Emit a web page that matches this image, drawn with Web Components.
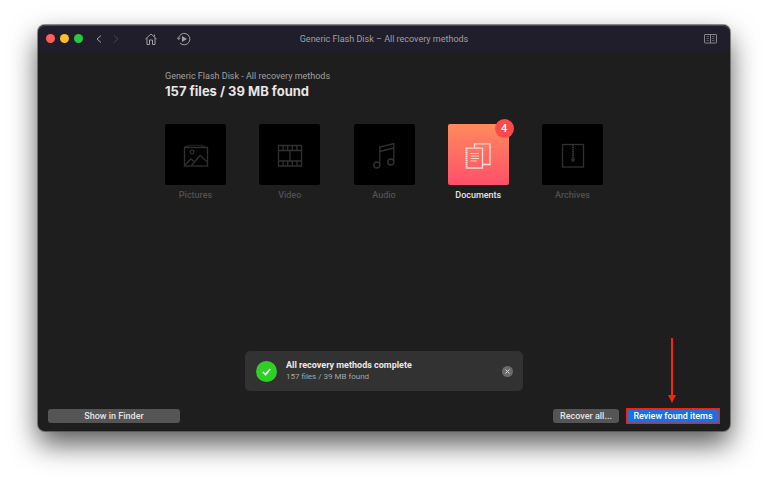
<!DOCTYPE html>
<html lang="en">
<head>
<meta charset="utf-8">
<title>Generic Flash Disk – All recovery methods</title>
<style>
body{margin:0;background:#fff;font-family:Roboto,"Liberation Sans",sans-serif;font-size:9px;line-height:12px}
</style>
</head>
<body>
<app-window>
  <title-bar slot="bar">Generic Flash Disk – All recovery methods</title-bar>
  <scan-summary>
    <span slot="source">Generic Flash Disk - All recovery methods</span>
    <span slot="total">157 files / 39 MB found</span>
  </scan-summary>
  <category-grid>
    <file-category label="Pictures">
      <svg viewBox="0 0 26 26"><path d="M2 5V4.500h3V3.500h14v1h3V5" opacity=".6"/><rect x="1.500" y="5.500" width="23" height="18.500"/><circle cx="9" cy="10" r="1.800"/><path d="M2 23l6-6 3.500 3M8.500 23.500l8.500-10 7.500 6.500"/></svg>
    </file-category>
    <file-category label="Video">
      <svg viewBox="0 0 26 26"><path d="M1.500 3.500h23v20.500h-23zM1.500 8.500h23M1.500 19h23M13 8.500V19M6.100 3.500v5M10.700 3.500v5M15.300 3.500v5M19.900 3.500v5M6.100 19v5M10.700 19v5M15.300 19v5M19.900 19v5"/></svg>
    </file-category>
    <file-category label="Audio">
      <svg viewBox="0 0 26 26"><circle cx="5.800" cy="23" r="3"/><circle cx="19.800" cy="20" r="3"/><path d="M8.800 23V5l14-3.500V20M8.800 9.500l14-3.500"/></svg>
    </file-category>
    <file-category label="Documents" count="4" active>
      <svg viewBox="0 0 26 26"><path d="M9.500 6V1.800h15.500V22.500H18"/><path d="M2 6.200H17.500V26H2"/><path d="M1.500 5.600V26.600" stroke-width="2" stroke-dasharray="1.400 .6"/><path stroke-width=".9" d="M5.500 11.500h8.500M5.500 14h8.500M5.500 16.500h8.500M5.500 19h6"/></svg>
    </file-category>
    <file-category label="Archives">
      <svg viewBox="0 0 26 26"><rect x="2.500" y="2.500" width="21" height="22.500"/><path d="M13 2.500V17" stroke-width="2" stroke-dasharray="1.500 .5"/><rect x="12" y="17" width="2" height="2"/></svg>
    </file-category>
  </category-grid>
  <status-toast slot="toast">
    <span slot="title">All recovery methods complete</span>
    <span slot="detail">157 files / 39 MB found</span>
  </status-toast>
  <action-bar slot="actions">
    <push-button slot="start" wide>Show in Finder</push-button>
    <push-button>Recover all...</push-button>
    <push-button primary>Review found items</push-button>
  </action-bar>
</app-window>

<script>
const define = (name, html, setup) => customElements.define(name, class extends HTMLElement {
  constructor() {
    super();
    const t = document.createElement('template');
    t.innerHTML = `<style>*{box-sizing:border-box}button{font:inherit;color:inherit;border:0;padding:0;margin:0;background:none}svg{display:block;fill:none;stroke:currentColor}</style>` + html;
    this.attachShadow({mode: 'open'}).append(t.content.cloneNode(true));
    if (setup) setup(this, this.shadowRoot);
  }
});

define('app-window', `
<style>
:host{display:flex;box-sizing:border-box;min-height:100vh;padding:25px 38px 50px}
.win{flex:1;display:flex;flex-direction:column;min-width:0;background:#1e1e1e;border-radius:7px;box-shadow:0 0 0 1px rgba(70,70,72,.6),0 13px 28px rgba(0,0,0,.66)}
main{flex:1;width:100%;max-width:438px;margin:0 auto;padding-top:19px}
.toast{display:flex;justify-content:center;padding-bottom:17px}
</style>
<div class="win">
  <slot name="bar"></slot>
  <main><slot></slot></main>
  <div class="toast"><slot name="toast"></slot></div>
  <slot name="actions"></slot>
</div>`);

define('title-bar', `
<style>
:host{display:block;color:#a09ea6}
header{display:grid;grid-template-columns:1fr auto 1fr;align-items:center;height:26px;padding:1px 13px 0 8px;background:#201e2a;border-radius:7px 7px 0 0;box-shadow:inset 0 1px 0 #4b4a50}
nav,.lights{display:flex;align-items:center}
.lights{gap:5px;margin-right:12px}
.lights button{width:9px;height:9px;border-radius:50%}
.r{background:#ff5f57}.y{background:#febc2e}.g{background:#28c840}
.back,.next{width:8px;margin-right:9px}
.next{color:#47454f;margin-right:25px}
.home{margin-right:20px}
.end{justify-self:end;color:#85838c}
h1{font-size:9px;font-weight:400;margin:0;padding-left:5px;white-space:nowrap}
</style>
<header>
  <nav>
    <div class="lights"><button class="r" aria-label="Close"></button><button class="y" aria-label="Minimize"></button><button class="g" aria-label="Zoom"></button></div>
    <button class="back" aria-label="Back"><svg width="8" height="10" viewBox="0 0 8 10"><path d="M6 1.500L2 5l4 3.500"/></svg></button>
    <button class="next" aria-label="Forward"><svg width="8" height="10" viewBox="0 0 8 10"><path d="M2 1.500L6 5 2 8.500"/></svg></button>
    <button class="home" aria-label="Home"><svg width="12" height="12" viewBox="0 0 12 12"><path d="M.5 6L6 1l5.500 5M2 5v6.500h2.500V7h3v4.500H10V5M9.500 3.500V1.500"/></svg></button>
    <button aria-label="Sessions"><svg width="14" height="14" viewBox="0 0 14 14"><path d="M1.500 6.500A5.700 5.700 0 1 1 3 11M0 5.500l1.500 2L3.500 6"/><path fill="currentColor" stroke="none" d="M5 4v6l5-3z"/></svg></button>
  </nav>
  <h1><slot></slot></h1>
  <button class="end" aria-label="Guide"><svg width="13" height="10" viewBox="0 0 13 10"><rect x=".5" y=".5" width="12" height="8.500" rx=".5"/><path d="M6.500 .5V9"/><path stroke-width=".6" d="M2.500 2.500h2.500M2.500 4.500h2.500M2.500 6.500h2.500M8 2.500h2.500M8 4.500h2.500M8 6.500h2.500"/></svg></button>
</header>`);

define('scan-summary', `
<style>
:host{display:block}
p{margin:0;color:#a0a0a0}
h2{margin:0;font-family:Inter,"Liberation Sans",sans-serif;font-size:13px;line-height:18px;font-weight:700;color:#e6e6e6}
</style>
<p><slot name="source"></slot></p><h2><slot name="total"></slot></h2>`);

define('category-grid', `
<style>:host{display:flex;justify-content:space-between;gap:8px;margin-top:24px}</style><slot></slot>`);

define('file-category', `
<style>
:host{display:block;font-weight:500}
button{display:flex;flex-direction:column;align-items:center;gap:4px;width:61px}
.tile{position:relative;display:grid;place-items:center;width:61px;height:61px;border-radius:2px;background:#000;color:#303030}
.label{color:#505050}
:host([active]) .tile{background:linear-gradient(#ff8a5c,#ff4f69);color:#ffdcd8}
:host([active]) .label{color:#e4e4e4}
.badge{position:absolute;top:-5px;right:-5px;width:19px;height:19px;border-radius:50%;background:#fc4a4a;color:#fff;font-size:11px;line-height:19px;text-align:center}
.badge:empty{display:none}
::slotted(svg){display:block;width:26px;height:26px;fill:none;stroke:currentColor;stroke-width:1.3;overflow:visible}
</style>
<button><span class="tile"><slot></slot><span class="badge"></span></span><span class="label"></span></button>`,
(el, root) => {
  root.querySelector('.label').textContent = el.getAttribute('label');
  root.querySelector('.badge').textContent = el.getAttribute('count') || '';
});

define('status-toast', `
<style>
:host{display:flex;align-items:center;box-sizing:border-box;width:278px;height:40px;padding:0 10px 0 11px;gap:9px;border-radius:5px;background:#323232}
.ok{width:21px;height:21px;flex:none;stroke:none}
.text{flex:1}
.text div:first-child{font-weight:700;color:#e8e8e8}
.text div:last-child{font-size:8px;color:#a5a5a5}
</style>
<svg class="ok" viewBox="0 0 21 21"><circle cx="10.500" cy="10.500" r="10.500" fill="#2fd025"/><path d="M6.800 10.800l2.700 2.700 4.800-5.500" stroke="#fff" stroke-width="1.600"/></svg>
<div class="text"><div><slot name="title"></slot></div><div><slot name="detail"></slot></div></div>
<button aria-label="Dismiss"><svg width="11" height="11" viewBox="0 0 11 11"><circle cx="5.500" cy="5.500" r="5.500" fill="#6b6b6b" stroke="none"/><path d="M3.500 3.500l4 4M7.500 3.500l-4 4" stroke="#d8d8d8"/></svg></button>`);

define('action-bar', `
<style>
:host{display:flex;justify-content:space-between;align-items:center;padding:0 10px 7px}
.end{display:flex;align-items:center;gap:7px}
</style>
<slot name="start"></slot><div class="end"><slot></slot></div>`);

define('push-button', `
<style>
:host{display:block;position:relative}
button{display:block;height:14px;min-width:66px;padding:0 4px;border-radius:3px;background:#555;color:#e4e4e4;line-height:14px;font-weight:500;white-space:nowrap}
:host([wide]) button{min-width:132px}
:host([primary]) button{height:16px;min-width:94px;line-height:14px;padding:0 4px;border:1px solid #f3200c;outline:1px solid rgba(243,32,12,.5);outline-offset:-2px;border-radius:0;background:#1672e6;color:#fff}
.arrow{display:none;position:absolute;left:50%;bottom:100%;margin:0 0 5px -5px}
:host([primary]) .arrow{display:block}
</style>
<button><slot></slot></button>
<svg class="arrow" width="8" height="65" viewBox="0 0 8 65" aria-hidden="true"><path d="M4 0v58" stroke="#f9240a" stroke-width="2"/><path d="M0 57h8L4 65z" fill="#f9240a" stroke="none"/></svg>`);
</script>
</body>
</html>
